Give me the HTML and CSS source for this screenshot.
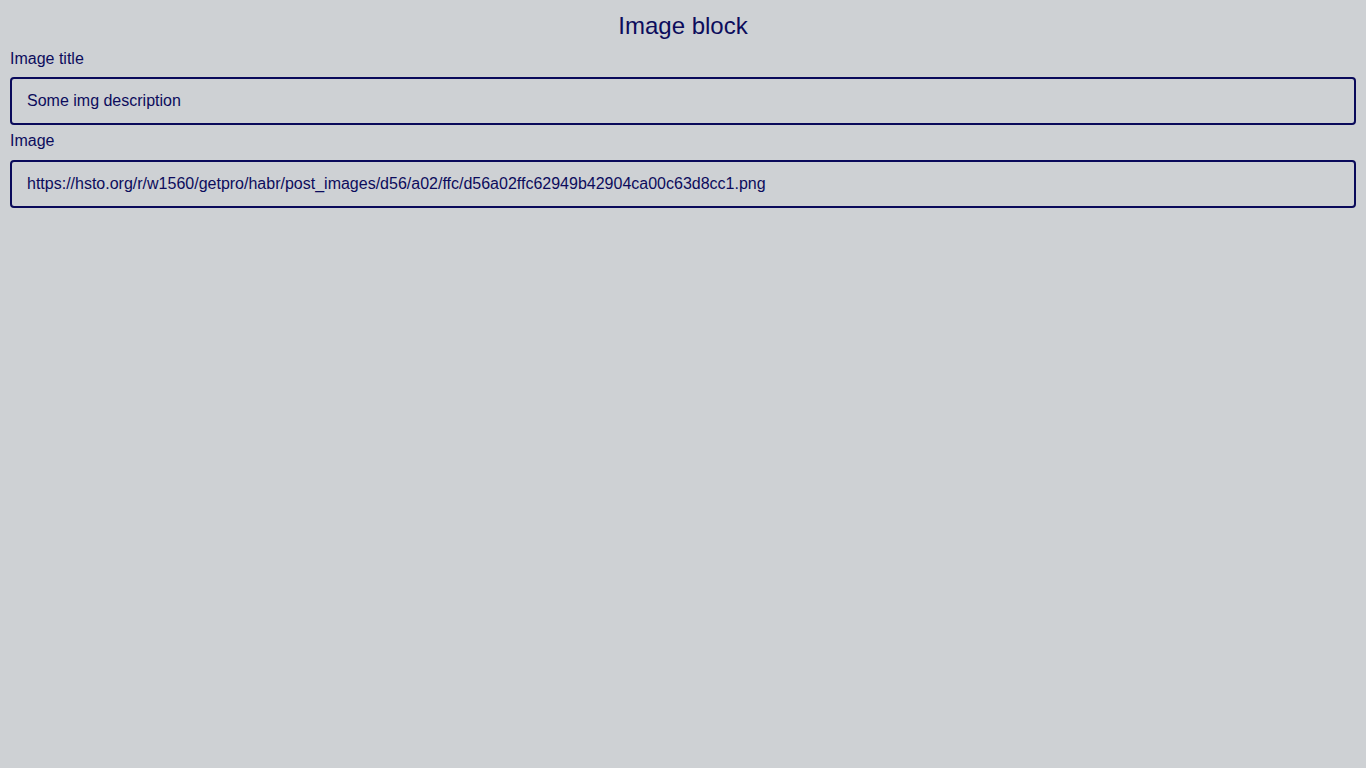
FILE: index.html
```html
<!DOCTYPE html>
<html lang="en">
<head>
<meta charset="utf-8">
<title>Image block</title>
<link rel="stylesheet" href="styles.css">
</head>
<body>
<main class="editor">
  <h1 class="editor-title">Image block</h1>
  <div class="field">
    <label class="field-label" for="img-title">Image title</label>
    <input class="field-input" id="img-title" type="text" value="Some img description">
  </div>
  <div class="field">
    <label class="field-label" for="img-src">Image</label>
    <input class="field-input" id="img-src" type="text" value="https://hsto.org/r/w1560/getpro/habr/post_images/d56/a02/ffc/d56a02ffc62949b42904ca00c63d8cc1.png">
  </div>
</main>
</body>
</html>
```

FILE: styles.css
```css
html, body {
  margin: 0;
  padding: 0;
  background: #ced1d4;
  height: 100%;
}
body {
  font-family: "Liberation Sans", Arial, sans-serif;
  color: #0c0c5c;
}
.editor {
  display: flex;
  flex-direction: column;
  padding: 12px 10px 10px;
}
.editor-title {
  margin: 0 0 10px;
  font-size: 24px;
  font-weight: normal;
  text-align: center;
  line-height: normal;
}
.field {
  display: flex;
  flex-direction: column;
  margin-bottom: 7px;
}
.field-label {
  font-size: 16px;
  line-height: 18.4px;
  margin-bottom: 9px;
}
.field-input {
  box-sizing: border-box;
  height: 48px;
  width: 100%;
  margin: 0;
  padding: 0 15px;
  border: 2px solid #0a0a5a;
  border-radius: 4px;
  background: transparent;
  color: #0c0c5c;
  font-family: "Liberation Sans", Arial, sans-serif;
  font-size: 16px;
  outline: none;
}
```
